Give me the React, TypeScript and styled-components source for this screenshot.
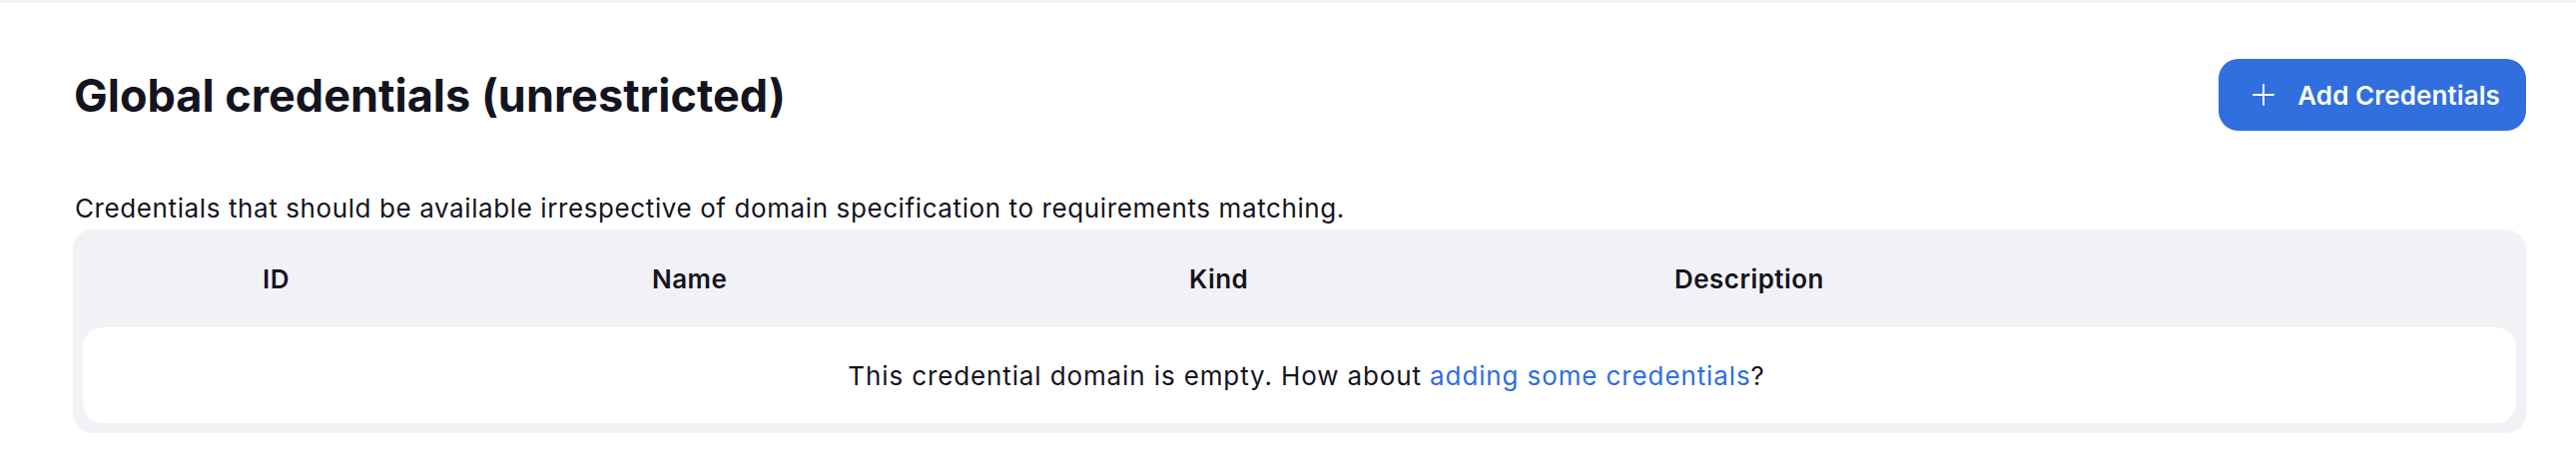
import styled, { createGlobalStyle } from 'styled-components';

const GlobalStyle = createGlobalStyle`
  html, body {
    margin: 0;
    padding: 0;
    background: #ffffff;
  }
  body {
    font-family: Inter, "Noto Sans", "Liberation Sans", sans-serif;
    color: #14141f;
  }
`;

const TopEdge = styled.div`
  height: 3px;
  background: #f3f3f6;
`;

const Page = styled.main`
  padding: 0 50px 0 73px;
`;

const Header = styled.div`
  display: flex;
  align-items: center;
  justify-content: space-between;
  padding-top: 56px;
  height: 72px;
`;

const Title = styled.h1`
  margin: 0 0 0 1px;
  font-size: 45px;
  font-weight: 700;
  color: #14141f;
`;

const AddButton = styled.button`
  display: flex;
  align-items: center;
  gap: 23px;
  height: 72px;
  padding: 0 26px 0 34px;
  border: none;
  border-radius: 20px;
  background: #306fdd;
  color: #ffffff;
  font-family: inherit;
  font-size: 26px;
  font-weight: 600;
  letter-spacing: 0.1px;
  cursor: pointer;
`;

const Intro = styled.p`
  margin: 62px 0 5px 2px;
  font-size: 26px;
  line-height: 32px;
  letter-spacing: 0.6px;
`;

const TableCard = styled.div`
  background: #f2f2f6;
  border-radius: 20px;
  padding: 0 10px 10px;
`;

const HeadRow = styled.div`
  display: grid;
  grid-template-columns: 390px 538px 486px 1fr;
  align-items: center;
  height: 98px;
  padding-left: 180px;
`;

const HeadCell = styled.div`
  font-size: 26px;
  font-weight: 600;
  letter-spacing: 0.45px;
`;

const EmptyRow = styled.div`
  display: flex;
  align-items: center;
  justify-content: center;
  height: 96px;
  padding-left: 14px;
  background: #ffffff;
  border-radius: 20px;
  font-size: 26px;
  letter-spacing: 0.88px;
`;

const Link = styled.a`
  color: #2e6ee0;
  text-decoration: none;
`;

const PlusIcon = () => (
  <svg width="22" height="22" viewBox="0 0 22 22" fill="none" stroke="currentColor" strokeWidth="2" strokeLinecap="round">
    <path d="M11 1v20M1 11h20" />
  </svg>
);

export default function App() {
  return (
    <>
      <GlobalStyle />
      <TopEdge />
      <Page>
        <Header>
          <Title>Global credentials (unrestricted)</Title>
          <AddButton>
            <PlusIcon />
            Add Credentials
          </AddButton>
        </Header>
        <Intro>Credentials that should be available irrespective of domain specification to requirements matching.</Intro>
        <TableCard>
          <HeadRow>
            <HeadCell>ID</HeadCell>
            <HeadCell>Name</HeadCell>
            <HeadCell>Kind</HeadCell>
            <HeadCell>Description</HeadCell>
          </HeadRow>
          <EmptyRow>
            <span>
              This credential domain is empty. How about <Link href="#">adding some credentials</Link>?
            </span>
          </EmptyRow>
        </TableCard>
      </Page>
    </>
  );
}
